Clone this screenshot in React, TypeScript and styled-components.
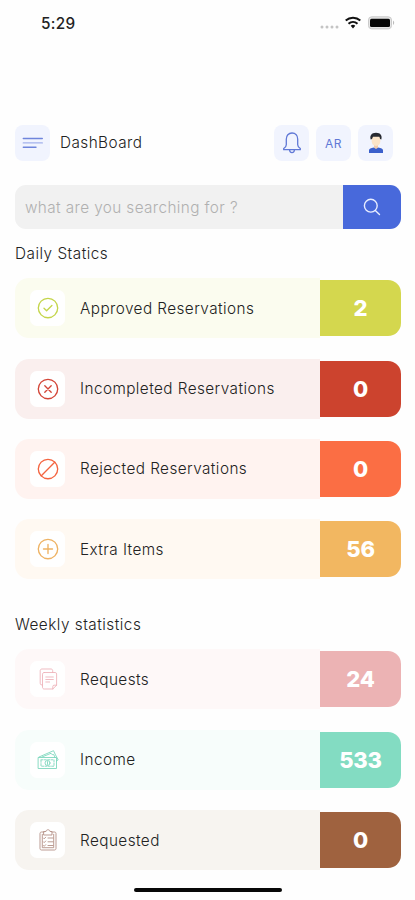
import React from 'react';
import styled, { createGlobalStyle } from 'styled-components';

const GlobalStyle = createGlobalStyle`
  * { box-sizing: border-box; }
  body { margin: 0; background: #fefefe; font-family: Inter, Roboto, sans-serif; color: #222; }
  svg { display: block; flex: none; }
`;

const Screen = styled.div`
  width: 415px;
  height: 900px;
  overflow: hidden;
  display: flex;
  flex-direction: column;
  background: #fefefe;
`;

const StatusBar = styled.div`
  height: 46px;
  flex: none;
  padding: 0 20px 0 41px;
  display: flex;
  justify-content: space-between;
  align-items: center;
`;

const Clock = styled.span`
  font-size: 15.3px;
  font-weight: 500;
  letter-spacing: 0.35px;
  color: #222;
`;

const Header = styled.header`
  height: 36px;
  flex: none;
  margin: 79px 22px 0 15px;
  display: flex;
  align-items: center;
`;

const HeaderTile = styled.button`
  width: 35px;
  height: 36px;
  padding: 0;
  border: 0;
  border-radius: 8px;
  background: #f1f4fe;
  color: #6078d6;
  font: 400 12px Inter, sans-serif;
  letter-spacing: 0.4px;
  display: flex;
  align-items: center;
  justify-content: center;
`;

const Title = styled.h1`
  margin: 0 auto 0 10px;
  padding-bottom: 2px;
  font-size: 15.3px;
  font-weight: 300;
  letter-spacing: 0.45px;
  white-space: nowrap;
`;

const Actions = styled.div`
  display: flex;
  gap: 7px;
`;

const SearchBar = styled.div`
  height: 44px;
  flex: none;
  margin: 24px 14px 0 15px;
  border-radius: 11px;
  overflow: hidden;
  display: flex;
  background: #f1f1f1;
`;

const SearchInput = styled.div`
  flex: 1;
  padding: 0 0 0 10px;
  display: flex;
  align-items: center;
  font-size: 15.3px;
  font-weight: 300;
  letter-spacing: 0.4px;
  color: #b0b0b0;
  white-space: nowrap;
`;

const SearchButton = styled.button`
  width: 58px;
  padding: 0;
  border: 0;
  background: #4869db;
  display: flex;
  align-items: center;
  justify-content: center;
`;

const SectionTitle = styled.h2<{ $top: number }>`
  height: 20px;
  flex: none;
  margin: ${(p) => p.$top}px 0 0 15px;
  font-size: 15.3px;
  line-height: 20px;
  font-weight: 300;
  letter-spacing: 0.5px;
`;

const CardList = styled.div<{ $top: number }>`
  margin: ${(p) => p.$top}px 14px 0 15px;
  display: flex;
  flex-direction: column;
  gap: 20.3px;
`;

const Card = styled.div`
  height: 60px;
  display: flex;
  align-items: center;
`;

const CardBody = styled.div<{ $tint: string }>`
  flex: 1;
  height: 100%;
  padding-left: 15px;
  border-radius: 14px 0 0 14px;
  background: ${(p) => p.$tint};
  display: flex;
  align-items: center;
  gap: 15px;
`;

const IconTile = styled.div<{ $color: string }>`
  width: 35px;
  height: 36px;
  border-radius: 7px;
  background: #fff;
  color: ${(p) => p.$color};
  display: flex;
  align-items: center;
  justify-content: center;
`;

const Label = styled.span`
  font-size: 15.3px;
  font-weight: 300;
  letter-spacing: 0.44px;
  white-space: nowrap;
`;

const Value = styled.div<{ $color: string }>`
  width: 81px;
  height: 56px;
  border-radius: 0 13px 13px 0;
  background: ${(p) => p.$color};
  color: #fff;
  font-size: 22px;
  font-weight: 800;
  letter-spacing: -0.2px;
  display: flex;
  align-items: center;
  justify-content: center;
`;

const HomeIndicator = styled.div`
  width: 148px;
  height: 4px;
  flex: none;
  margin: 17.7px 0 0 134px;
  border-radius: 2px;
  background: #080808;
`;

type IconName = 'check' | 'cross' | 'ban' | 'plus' | 'notes' | 'money' | 'clipboard';

const shapes: Record<IconName, React.ReactNode> = {
  check: <><circle cx="11" cy="11" r="9.7" /><path d="m7 11.2 2.6 2.5 5.3-5.2" /></>,
  cross: <><circle cx="11" cy="11" r="9.7" /><path d="m7.8 7.8 6.4 6.4m0-6.4-6.4 6.4" /></>,
  ban: <><circle cx="11" cy="11" r="9.7" /><path d="M4.3 17.7 17.7 4.3" /></>,
  plus: <><circle cx="11" cy="11" r="9.7" /><path d="M11 6.500v9M6.500 11h9" /></>,
  notes: (
    <>
      <path d="M5.5 17H5a1.8 1.8 0 0 1-1.8-1.8V2.7C3.2 1.6 4 1 5 1h9c1 0 1.7.7 1.7 1.7v1.8" />
      <path d="M7.2 4.5h11c.8 0 1.4.6 1.4 1.4v11.3l-3.8 3.8H7.2c-1 0-1.7-.7-1.7-1.7V6.2c0-1 .7-1.7 1.7-1.7Z" />
      <path d="M15.8 21v-2.5c0-.8.5-1.3 1.3-1.3h2.5M8.8 9h7.5M8.8 11.5h7.5M8.8 14h3.8" />
    </>
  ),
  money: (
    <>
      <path d="M1.5 8.5h18v11h-18zM2 8 16.5 1.7l2 4.2 2.7 5-1.7 1M5 8l9-3.7c.5 1.3 1.5 1.4 2.8 1.3L18 8.5" />
      <path d="M4 10.8h13v6.4H4z" strokeDasharray="2 1.3" />
      <circle cx="10.5" cy="14" r="2.5" />
      <path d="M10.5 12.6v2.8" />
    </>
  ),
  clipboard: (
    <>
      <path d="M7 3H4.6C3.5 3 3 3.7 3 4.5v15c0 .9.6 1.5 1.5 1.5h13c.9 0 1.5-.6 1.5-1.5v-15C19 3.6 18.4 3 17.5 3H15M7 2.5h2C9.2 1.3 9.8.8 11 .8s1.8.5 2 1.7h2V6H7zM5.3 5.3v13.4h11.4V5.3" />
      <path d="m6.4 9 .8.8 1.5-1.6m-2.3 4.6.8.8 1.5-1.6m-2.3 4.5.8.8 1.5-1.6M11 9h5m-5 3.800h5m-5 3.700h5" />
    </>
  ),
};

const thinIcons: IconName[] = ['notes', 'money', 'clipboard'];

const CardIcon = ({ name }: { name: IconName }) => (
  <svg
    width="22" height="22" viewBox="0 0 22 22" fill="none" stroke="currentColor"
    strokeWidth={thinIcons.includes(name) ? 0.85 : 1.35} strokeLinecap="round" strokeLinejoin="round"
  >
    {shapes[name]}
  </svg>
);

interface Stat {
  label: string;
  value: number;
  icon: IconName;
  iconColor: string;
  tint: string;
  color: string;
}

const daily: Stat[] = [
  { label: 'Approved Reservations', value: 2, icon: 'check', iconColor: '#c4d54b', tint: '#fbfcef', color: '#d4d74e' },
  { label: 'Incompleted Reservations', value: 0, icon: 'cross', iconColor: '#d34537', tint: '#faefee', color: '#cc432e' },
  { label: 'Rejected Reservations', value: 0, icon: 'ban', iconColor: '#f46440', tint: '#fff3f0', color: '#fb6e44' },
  { label: 'Extra Items', value: 56, icon: 'plus', iconColor: '#eeb263', tint: '#fff9f2', color: '#f2b761' },
];

const weekly: Stat[] = [
  { label: 'Requests', value: 24, icon: 'notes', iconColor: '#edb0b7', tint: '#fef8f8', color: '#ecb3b4' },
  { label: 'Income', value: 533, icon: 'money', iconColor: '#76d5b9', tint: '#f7fdfb', color: '#83dcc2' },
  { label: 'Requested', value: 0, icon: 'clipboard', iconColor: '#b08a80', tint: '#f7f4f0', color: '#9f623f' },
];

const StatCards = ({ items, top }: { items: Stat[]; top: number }) => (
  <CardList $top={top}>
    {items.map((s) => (
      <Card key={s.label}>
        <CardBody $tint={s.tint}>
          <IconTile $color={s.iconColor}><CardIcon name={s.icon} /></IconTile>
          <Label>{s.label}</Label>
        </CardBody>
        <Value $color={s.color}>{s.value}</Value>
      </Card>
    ))}
  </CardList>
);

const StatusIcons = () => (
  <svg width="75" height="16" viewBox="0 0 75 16">
    <g fill="#c4c4c4">
      <circle cx="2" cy="12" r="1.5" /><circle cx="7" cy="12" r="1.5" />
      <circle cx="12" cy="12" r="1.5" /><circle cx="17" cy="12" r="1.5" />
    </g>
    <g fill="none" stroke="#111" strokeWidth="2">
      <path d="M25.7 5.4a11 11 0 0 1 14.6 0M28.5 8.7a6.8 6.8 0 0 1 9 0" />
    </g>
    <path d="m30.7 10.8 2.3 2.8 2.3-2.8a3.5 3.5 0 0 0-4.6 0Z" fill="#111" />
    <rect x="48.5" y="1.8" width="23" height="12" rx="3.2" fill="#e6e6e6" stroke="#cacaca" />
    <rect x="50" y="3.7" width="20" height="8.3" rx="1.5" fill="#080808" />
    <path d="M73 5.5c1.6.8 1.6 3.7 0 4.5Z" fill="#bbb" />
  </svg>
);

const MenuIcon = () => (
  <svg width="22" height="12" viewBox="0 0 22 12" stroke="#6f85dc" strokeWidth="1.4" strokeLinecap="round">
    <path d="M1.3 1.5h19M1.3 10.3H14" />
    <path d="M1.3 5.9h19" stroke="#a3b1eb" />
  </svg>
);

const BellIcon = () => (
  <svg width="20" height="22" viewBox="0 0 20 22" fill="none" stroke="#6078d6" strokeWidth="1.3" strokeLinejoin="round">
    <path d="M10 1C6.5 1 4.3 3.6 4.3 7.2v5.5c0 1.5-.6 2.4-2.6 3.8v1.2h16.6v-1.2c-2-1.4-2.6-2.3-2.6-3.8V7.2C15.7 3.6 13.5 1 10 1ZM7.5 18c.3 1.7 1.2 2.7 2.5 2.7s2.2-1 2.5-2.7" />
  </svg>
);

const AvatarIcon = () => (
  <svg width="16" height="22" viewBox="0 0 16 22">
    <path d="M6 12h4v5H6z" fill="#f1cbaa" />
    <path d="M3.7 4h8.6v5.3c0 2.8-1.8 4.7-4.3 4.7s-4.3-1.9-4.3-4.7Z" fill="#fce5c8" />
    <path d="M2.7 7.5C1.5 3.7 3.5.8 8 .8s6.5 2.9 5.3 6.7l-1.2-.6-.7-2.2H5l-1 2.2Z" fill="#272a31" />
    <path d="M1 21v-2.8C1 16.5 3 16 5.7 15.5L8 17l2.3-1.5C13 16 15 16.5 15 18.2V21Z" fill="#3b60cb" />
  </svg>
);

const SearchIcon = () => (
  <svg width="18" height="18" viewBox="0 0 18 18" fill="none" stroke="#e8edff" strokeWidth="1.4" strokeLinecap="round">
    <circle cx="7.8" cy="7.7" r="6.4" /><path d="m12.3 12.4 4.2 4" />
  </svg>
);

export default function App() {
  return (
    <Screen>
      <GlobalStyle />
      <StatusBar>
        <Clock>5:29</Clock>
        <StatusIcons />
      </StatusBar>
      <Header>
        <HeaderTile aria-label="Menu"><MenuIcon /></HeaderTile>
        <Title>DashBoard</Title>
        <Actions>
          <HeaderTile aria-label="Notifications"><BellIcon /></HeaderTile>
          <HeaderTile>AR</HeaderTile>
          <HeaderTile aria-label="Profile"><AvatarIcon /></HeaderTile>
        </Actions>
      </Header>
      <SearchBar>
        <SearchInput>what are you searching for ?</SearchInput>
        <SearchButton aria-label="Search"><SearchIcon /></SearchButton>
      </SearchBar>
      <SectionTitle $top={15}>Daily Statics</SectionTitle>
      <StatCards items={daily} top={14.3} />
      <SectionTitle $top={35.5}>Weekly statistics</SectionTitle>
      <StatCards items={weekly} top={14.8} />
      <HomeIndicator />
    </Screen>
  );
}
